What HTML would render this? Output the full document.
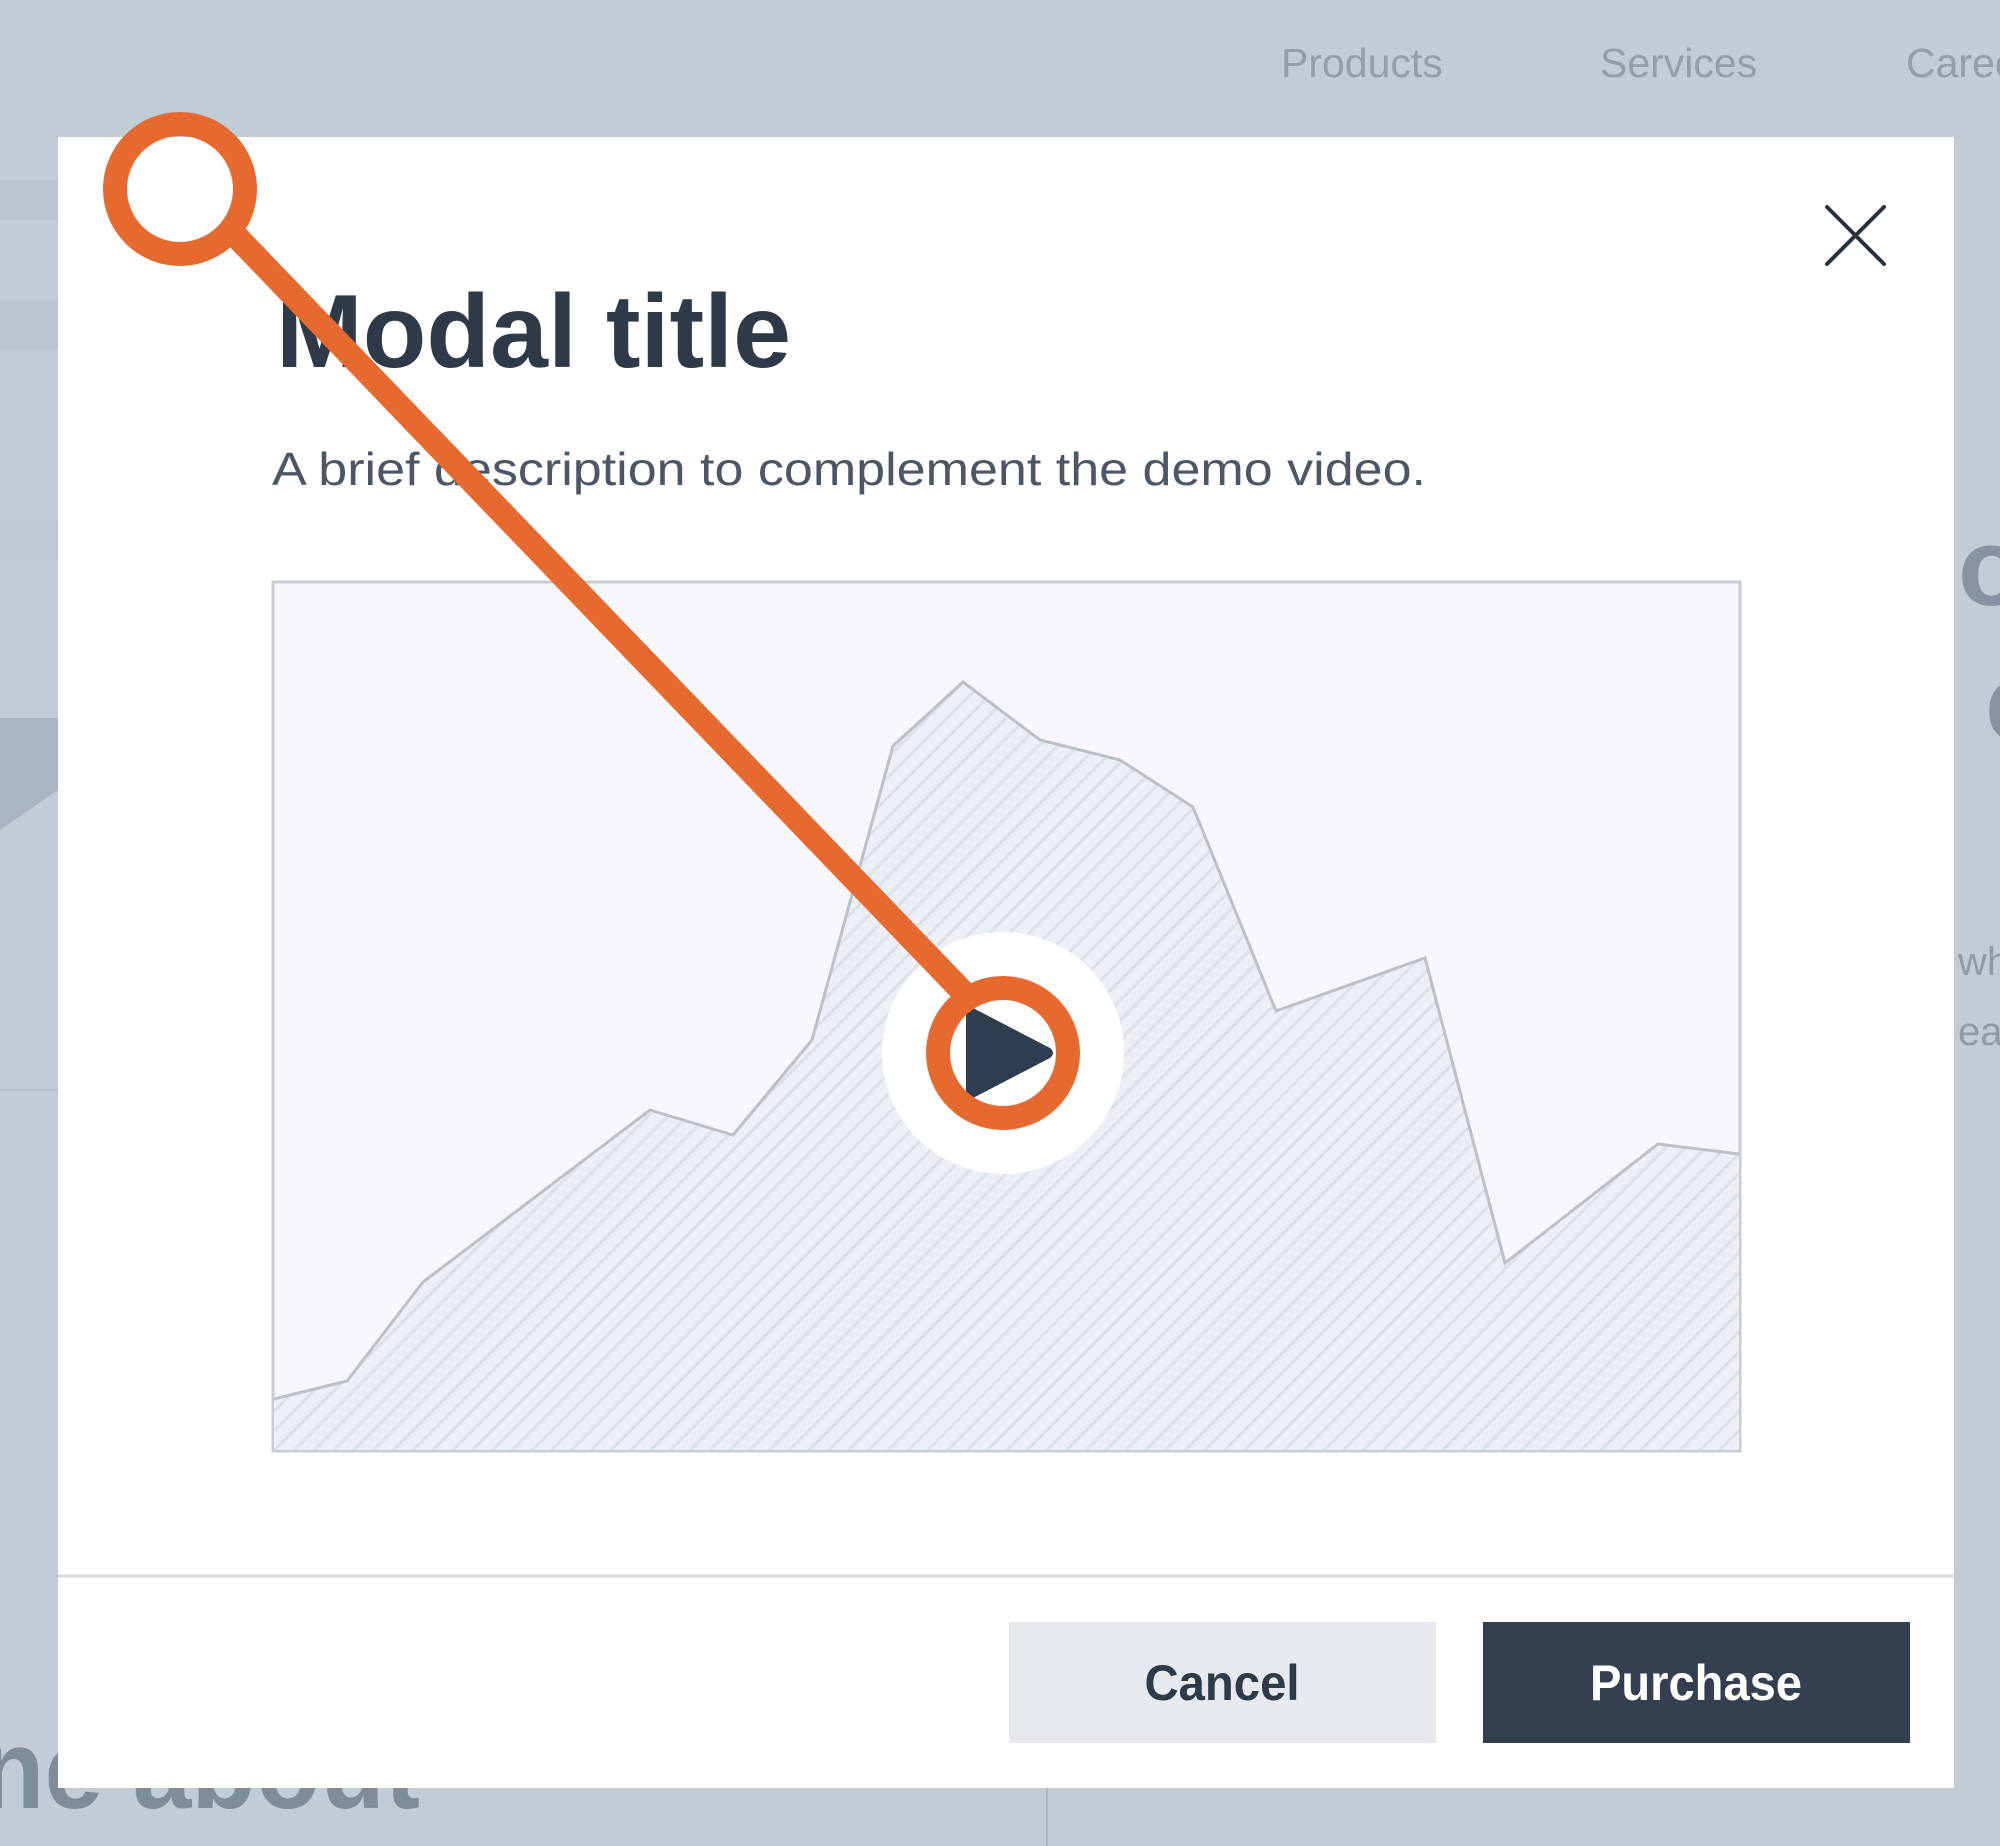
<!DOCTYPE html>
<html><head><meta charset="utf-8">
<style>
html,body{margin:0;padding:0;width:2000px;height:1846px;overflow:hidden;background:#c2ccd6;}
svg{display:block}
</style></head>
<body>
<svg width="2000" height="1846" viewBox="0 0 2000 1846" xmlns="http://www.w3.org/2000/svg" font-family="Liberation Sans, sans-serif">
<defs>
<pattern id="h" width="14" height="14" patternUnits="userSpaceOnUse" patternTransform="rotate(-45)">
<rect width="14" height="14" fill="#eceff4"/>
<rect width="14" height="3" fill="#dde2e9"/>
</pattern>
</defs>
<rect width="2000" height="1846" fill="#c2ccd6"/>
<rect x="0" y="180" width="58" height="40" fill="#bcc6d0"/>
<rect x="0" y="300" width="58" height="50" fill="#bbc5cf"/>
<rect x="0" y="520" width="58" height="40" fill="#bec8d2"/>
<polygon points="0,718 58,718 58,790 0,830" fill="#a9b5c2"/>
<line x1="0" y1="1090" x2="58" y2="1090" stroke="#b4bfca" stroke-width="2"/>
<line x1="1047" y1="1788" x2="1047" y2="1846" stroke="#aab5c0" stroke-width="2"/>
<text x="1281" y="77" font-size="41" fill="#929eac">Products</text>
<text x="1600" y="77" font-size="41" fill="#929eac">Services</text>
<text x="1906" y="77" font-size="41" fill="#929eac">Careers</text>
<text x="1958" y="605" font-size="110" font-weight="bold" fill="#8793a0">o</text>
<text x="1985" y="740" font-size="110" font-weight="bold" fill="#8793a0">c</text>
<text x="1958" y="975" font-size="40" fill="#8e9aa7">wh</text>
<text x="1958" y="1045" font-size="40" fill="#8e9aa7">eac</text>
<text x="-20" y="1808" font-size="112" font-weight="bold" fill="#7f8c99" textLength="440" lengthAdjust="spacingAndGlyphs">ne about</text>
<rect x="58" y="137" width="1896" height="1651" fill="#ffffff"/>
<line x1="58" y1="1576" x2="1954" y2="1576" stroke="#d4d9df" stroke-width="3"/>
<path d="M1827 207 L1884 264 M1884 207 L1827 264" stroke="#2a323c" stroke-width="4" fill="none" stroke-linecap="round"/>
<text x="276" y="367" font-size="104" font-weight="bold" fill="#2e3a48" textLength="515" lengthAdjust="spacingAndGlyphs">Modal title</text>
<text x="272" y="485" font-size="46" fill="#4c5665" textLength="1154" lengthAdjust="spacingAndGlyphs">A brief description to complement the demo video.</text>
<rect x="273" y="582" width="1467" height="869" fill="#f5f7fa" stroke="#c9cdd3" stroke-width="3"/>
<polygon points="274,1399 347,1381 423,1282 650,1110 733,1135 812,1040 893,746 963,682 1040,740 1120,760 1193,807 1276,1011 1425,958 1505,1263 1658,1144 1739,1154 1739,1450 274,1450" fill="url(#h)"/>
<polyline points="274,1399 347,1381 423,1282 650,1110 733,1135 812,1040 893,746 963,682 1040,740 1120,760 1193,807 1276,1011 1425,958 1505,1263 1658,1144 1739,1154" fill="none" stroke="#bcc1c8" stroke-width="3"/>
<circle cx="1003" cy="1053" r="121" fill="#ffffff"/>
<path d="M966 1012 Q966 1004 973 1008 L1050 1048 Q1056 1053 1050 1058 L973 1098 Q966 1102 966 1094 Z" fill="#2f3d50"/>
<line x1="236" y1="236" x2="963" y2="992" stroke="#e66a30" stroke-width="24"/>
<circle cx="180" cy="189" r="65" fill="none" stroke="#e66a30" stroke-width="24"/>
<circle cx="1003" cy="1053" r="65" fill="none" stroke="#e66a30" stroke-width="24"/>
<rect x="1009" y="1622" width="427" height="121" fill="#e6e9ed"/>
<text x="1222" y="1700" font-size="50" font-weight="bold" fill="#2e3a48" text-anchor="middle" textLength="155" lengthAdjust="spacingAndGlyphs">Cancel</text>
<rect x="1483" y="1622" width="427" height="121" fill="#34404f"/>
<text x="1696" y="1700" font-size="50" font-weight="bold" fill="#ffffff" text-anchor="middle" textLength="212" lengthAdjust="spacingAndGlyphs">Purchase</text>
</svg>
</body></html>
